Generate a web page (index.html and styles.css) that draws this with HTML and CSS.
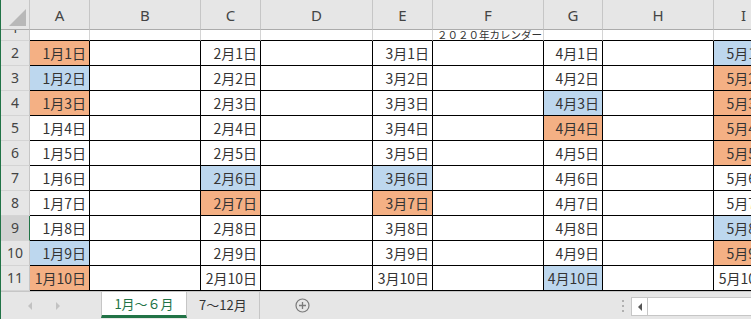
FILE: index.html
```html
<!DOCTYPE html>
<html lang="ja">
<head>
    <meta charset="UTF-8">
    <title>2020年カレンダー</title>
    <link rel="stylesheet" href="styles.css">
</head>
<body>

<div class="window">
    <div class="sheet">
        <!-- Header kolom -->
        <div class="corner"><span class="tri"></span></div>
        <div class="colhead">A</div>
        <div class="colhead">B</div>
        <div class="colhead">C</div>
        <div class="colhead">D</div>
        <div class="colhead">E</div>
        <div class="colhead">F</div>
        <div class="colhead">G</div>
        <div class="colhead">H</div>
        <div class="colhead">I</div>

        <!-- Baris 1 : judul -->
        <div class="rowhead"><span>1</span></div>
        <div class="top"></div>
        <div class="top"></div>
        <div class="top"></div>
        <div class="top"></div>
        <div class="top"></div>
        <div class="top title">２０２０年カレンダー</div>
        <div class="top"></div>
        <div class="top"></div>
        <div class="top"></div>

        <!-- Baris 2 -->
        <div class="rowhead"><span>2</span></div>
        <div class="day sun">1月1日</div><div class="gap"></div>
        <div class="day">2月1日</div><div class="gap"></div>
        <div class="day">3月1日</div><div class="gap"></div>
        <div class="day">4月1日</div><div class="gap"></div>
        <div class="day sat">5月1日</div>

        <!-- Baris 3 -->
        <div class="rowhead"><span>3</span></div>
        <div class="day sat">1月2日</div><div class="gap"></div>
        <div class="day">2月2日</div><div class="gap"></div>
        <div class="day">3月2日</div><div class="gap"></div>
        <div class="day">4月2日</div><div class="gap"></div>
        <div class="day sun">5月2日</div>

        <!-- Baris 4 -->
        <div class="rowhead"><span>4</span></div>
        <div class="day sun">1月3日</div><div class="gap"></div>
        <div class="day">2月3日</div><div class="gap"></div>
        <div class="day">3月3日</div><div class="gap"></div>
        <div class="day sat">4月3日</div><div class="gap"></div>
        <div class="day sun">5月3日</div>

        <!-- Baris 5 -->
        <div class="rowhead"><span>5</span></div>
        <div class="day">1月4日</div><div class="gap"></div>
        <div class="day">2月4日</div><div class="gap"></div>
        <div class="day">3月4日</div><div class="gap"></div>
        <div class="day sun">4月4日</div><div class="gap"></div>
        <div class="day sun">5月4日</div>

        <!-- Baris 6 -->
        <div class="rowhead"><span>6</span></div>
        <div class="day">1月5日</div><div class="gap"></div>
        <div class="day">2月5日</div><div class="gap"></div>
        <div class="day">3月5日</div><div class="gap"></div>
        <div class="day">4月5日</div><div class="gap"></div>
        <div class="day sun">5月5日</div>

        <!-- Baris 7 -->
        <div class="rowhead"><span>7</span></div>
        <div class="day">1月6日</div><div class="gap"></div>
        <div class="day sat">2月6日</div><div class="gap"></div>
        <div class="day sat">3月6日</div><div class="gap"></div>
        <div class="day">4月6日</div><div class="gap"></div>
        <div class="day">5月6日</div>

        <!-- Baris 8 -->
        <div class="rowhead"><span>8</span></div>
        <div class="day">1月7日</div><div class="gap"></div>
        <div class="day sun">2月7日</div><div class="gap"></div>
        <div class="day sun">3月7日</div><div class="gap"></div>
        <div class="day">4月7日</div><div class="gap"></div>
        <div class="day">5月7日</div>

        <!-- Baris 9 (terpilih) -->
        <div class="rowhead active"><span>9</span></div>
        <div class="day">1月8日</div><div class="gap"></div>
        <div class="day">2月8日</div><div class="gap"></div>
        <div class="day">3月8日</div><div class="gap"></div>
        <div class="day">4月8日</div><div class="gap"></div>
        <div class="day sat">5月8日</div>

        <!-- Baris 10 -->
        <div class="rowhead"><span>10</span></div>
        <div class="day sat">1月9日</div><div class="gap"></div>
        <div class="day">2月9日</div><div class="gap"></div>
        <div class="day">3月9日</div><div class="gap"></div>
        <div class="day">4月9日</div><div class="gap"></div>
        <div class="day sun">5月9日</div>

        <!-- Baris 11 -->
        <div class="rowhead"><span>11</span></div>
        <div class="day sun">1月10日</div><div class="gap"></div>
        <div class="day">2月10日</div><div class="gap"></div>
        <div class="day">3月10日</div><div class="gap"></div>
        <div class="day sat">4月10日</div><div class="gap"></div>
        <div class="day">5月10日</div>
    </div>

    <!-- Tab sheet -->
    <div class="tabbar">
        <div class="nav">
            <span class="arrow left"></span>
            <span class="arrow right"></span>
        </div>
        <div class="tab active">1月～６月</div>
        <div class="tab">7～12月</div>
        <div class="add">
            <svg width="15" height="15" viewBox="0 0 15 15">
                <circle cx="7.5" cy="7.5" r="6.5" fill="none" stroke="#7a7a7a" stroke-width="1.2"/>
                <path d="M7.5 4v7M4 7.5h7" stroke="#7a7a7a" stroke-width="1.3"/>
            </svg>
        </div>
        <div class="spacer"></div>
        <div class="grip"><i></i><i></i><i></i></div>
        <div class="hscroll">
            <span class="hbtn"><span class="arrow dark"></span></span>
        </div>
    </div>
</div>

</body>
</html>
```

FILE: styles.css
```css
/* Halaman */
body {
    margin: 0;
    overflow: hidden;
    background-color: #ffffff;
}

.window {
    width: 751px;
    height: 319px;
    border-left: 1px solid #217346;
    box-sizing: border-box;
    overflow: hidden;
    display: flex;
    flex-direction: column;
}

/* Grid lembar kerja */
.sheet {
    display: grid;
    grid-template-columns: 29px 60px 111px 60px 112px 60px 111px 59px 111px 60px;
    grid-template-rows: 30px 11px repeat(10, 25px);
    width: 773px;
    font-family: "Noto Sans CJK JP", sans-serif;
}

.sheet > div {
    box-sizing: border-box;
}

.corner {
    background-color: #e6e6e6;
    border-right: 1px solid #c6c6c6;
    border-bottom: 1px solid #ababab;
    position: relative;
}

.corner .tri {
    position: absolute;
    right: 3px;
    bottom: 3px;
    width: 0;
    height: 0;
    border-left: 17px solid transparent;
    border-bottom: 17px solid #b8b8b8;
}

.colhead {
    background-color: #e6e6e6;
    border-right: 1px solid #c6c6c6;
    border-bottom: 1px solid #ababab;
    display: flex;
    align-items: center;
    justify-content: center;
    font-family: "Noto Sans", sans-serif;
    font-size: 15px;
    color: #444;
}

.rowhead {
    background-color: #e6e6e6;
    border-right: 1px solid #c6c6c6;
    border-bottom: 1px solid #d4d4d4;
    display: flex;
    align-items: flex-end;
    justify-content: center;
    overflow: hidden;
    font-family: "Noto Sans", sans-serif;
    font-size: 14px;
    color: #444;
}

.rowhead span {
    line-height: 24px;
}

.rowhead.active {
    background-color: #d2d2d2;
    border-right-color: #217346;
}

/* Baris 1 */
.top {
    border-right: 1px solid #d4d4d4;
    border-bottom: 1px solid #000;
}

.title {
    font-size: 10.5px;
    line-height: 10px;
    color: #333;
    white-space: nowrap;
    padding-left: 4px;
    overflow: visible;
}

/* Sel tanggal */
.day, .gap {
    border-right: 1px solid #000;
    border-bottom: 1px solid #000;
}

.day {
    display: flex;
    align-items: center;
    justify-content: flex-end;
    padding-right: 3px;
    font-size: 14px;
    color: #333;
    white-space: nowrap;
}

.sun {
    background-color: #f4b084;
}

.sat {
    background-color: #bdd7ee;
}

/* Bar tab */
.tabbar {
    flex: 1;
    display: flex;
    align-items: stretch;
    background-color: #e6e6e6;
    border-top: 1px solid #c6c6c6;
    font-family: "Noto Sans CJK JP", sans-serif;
    font-size: 13px;
}

.nav {
    width: 100px;
    display: flex;
    align-items: center;
    gap: 24px;
    padding-left: 27px;
    box-sizing: border-box;
}

.arrow {
    width: 0;
    height: 0;
    border-top: 4px solid transparent;
    border-bottom: 4px solid transparent;
}

.arrow.left {
    border-right: 4px solid #c2c2c2;
}

.arrow.right {
    border-left: 4px solid #c2c2c2;
}

.arrow.dark {
    border-right: 4px solid #555;
}

.tab {
    display: flex;
    align-items: center;
    justify-content: center;
    padding: 0 12px 2px;
    color: #333;
    border-right: 1px solid #c6c6c6;
}

.tab.active {
    width: 86px;
    box-sizing: border-box;
    background-color: #ffffff;
    color: #217346;
    border-left: 1px solid #c6c6c6;
    border-bottom: 3px solid #217346;
    padding-bottom: 0;
    margin-bottom: 1px;
}

.add {
    display: flex;
    align-items: center;
    padding-left: 35px;
}

.spacer {
    flex: 1;
}

.grip {
    display: flex;
    flex-direction: column;
    justify-content: center;
    gap: 3px;
    width: 16px;
    align-items: center;
}

.grip i {
    width: 2px;
    height: 2px;
    background-color: #b0b0b0;
}

.hscroll {
    width: 119px;
    margin: 5px 0 3px 0;
    background-color: #ffffff;
    border: 1px solid #c6c6c6;
    border-right: none;
    display: flex;
}

.hbtn {
    width: 15px;
    border-right: 1px solid #c6c6c6;
    display: flex;
    align-items: center;
    justify-content: center;
}
```
